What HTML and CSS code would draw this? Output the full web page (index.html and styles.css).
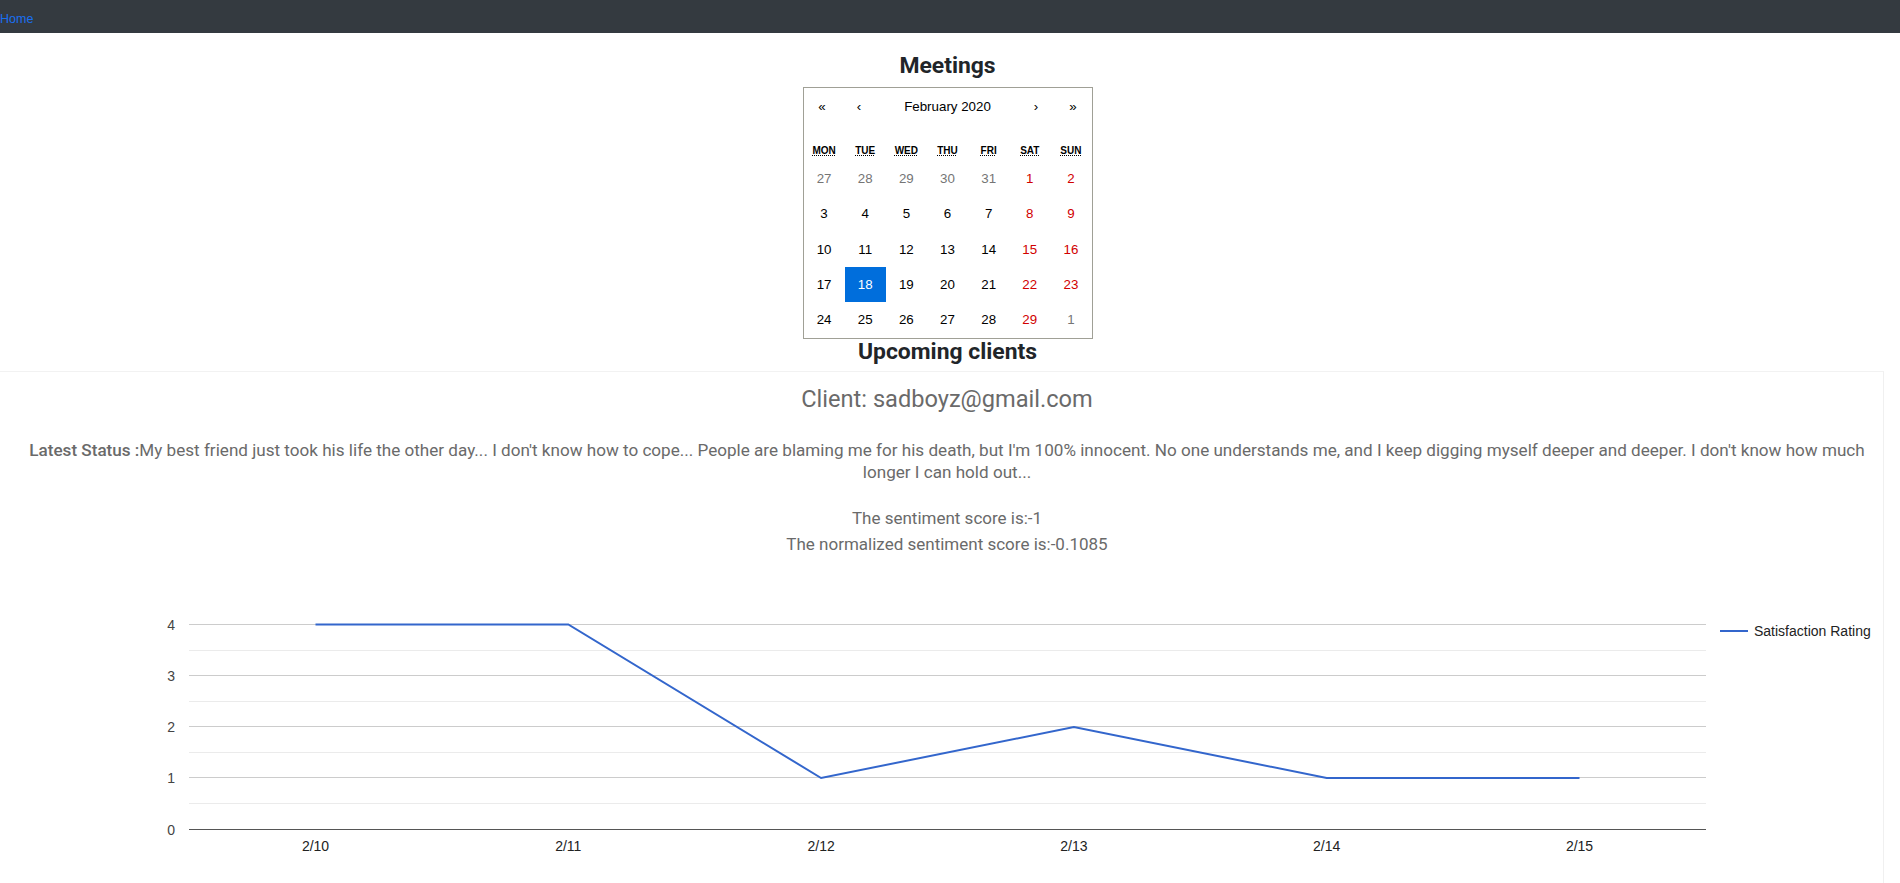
FILE: index.html
```html
<!DOCTYPE html>
<html lang="en">
<head>
<meta charset="utf-8">
<title>Meetings</title>
<link rel="stylesheet" href="styles.css">
</head>
<body>
<nav class="topbar"><a class="topbar-link" href="#">Home</a></nav>
<main class="main">
  <h3 class="section-title meetings-title">Meetings</h3>
  <div class="calendar">
    <div class="cal-nav">
      <button class="cal-arrow">«</button>
      <button class="cal-arrow">‹</button>
      <button class="cal-label">February 2020</button>
      <button class="cal-arrow">›</button>
      <button class="cal-arrow">»</button>
    </div>
    <div class="cal-weekdays">
      <div class="cal-weekday"><abbr title="Monday">Mon</abbr></div>
      <div class="cal-weekday"><abbr title="Tuesday">Tue</abbr></div>
      <div class="cal-weekday"><abbr title="Wednesday">Wed</abbr></div>
      <div class="cal-weekday"><abbr title="Thursday">Thu</abbr></div>
      <div class="cal-weekday"><abbr title="Friday">Fri</abbr></div>
      <div class="cal-weekday"><abbr title="Saturday">Sat</abbr></div>
      <div class="cal-weekday"><abbr title="Sunday">Sun</abbr></div>
    </div>
    <div class="cal-days">
      <button class="cal-tile neighbor">27</button>
      <button class="cal-tile neighbor">28</button>
      <button class="cal-tile neighbor">29</button>
      <button class="cal-tile neighbor">30</button>
      <button class="cal-tile neighbor">31</button>
      <button class="cal-tile weekend">1</button>
      <button class="cal-tile weekend">2</button>
      <button class="cal-tile">3</button>
      <button class="cal-tile">4</button>
      <button class="cal-tile">5</button>
      <button class="cal-tile">6</button>
      <button class="cal-tile">7</button>
      <button class="cal-tile weekend">8</button>
      <button class="cal-tile weekend">9</button>
      <button class="cal-tile">10</button>
      <button class="cal-tile">11</button>
      <button class="cal-tile">12</button>
      <button class="cal-tile">13</button>
      <button class="cal-tile">14</button>
      <button class="cal-tile weekend">15</button>
      <button class="cal-tile weekend">16</button>
      <button class="cal-tile">17</button>
      <button class="cal-tile active">18</button>
      <button class="cal-tile">19</button>
      <button class="cal-tile">20</button>
      <button class="cal-tile">21</button>
      <button class="cal-tile weekend">22</button>
      <button class="cal-tile weekend">23</button>
      <button class="cal-tile">24</button>
      <button class="cal-tile">25</button>
      <button class="cal-tile">26</button>
      <button class="cal-tile">27</button>
      <button class="cal-tile">28</button>
      <button class="cal-tile weekend">29</button>
      <button class="cal-tile neighbor">1</button>
    </div>
  </div>
  <h3 class="section-title clients-title">Upcoming clients</h3>
  <section class="card">
    <div class="card-text">
      <h5 class="client">Client: sadboyz@gmail.com</h5>
      <p class="status"><b class="status-label">Latest Status :</b>My best friend just took his life the other day... I don't know how to cope... People are blaming me for his death, but I'm 100% innocent. No one understands me, and I keep digging myself deeper and deeper. I don't know how much longer I can hold out...</p>
      <p class="score">The sentiment score is:-1</p>
      <p class="score">The normalized sentiment score is:-0.1085</p>
    </div>
    <svg class="chart" width="1883" height="330" viewBox="0 0 1883 330">
      <g class="grid-minor" stroke="#ebebeb" stroke-width="1">
        <line x1="189" y1="90.5" x2="1706" y2="90.5"/>
        <line x1="189" y1="141.5" x2="1706" y2="141.5"/>
        <line x1="189" y1="192.5" x2="1706" y2="192.5"/>
        <line x1="189" y1="243.5" x2="1706" y2="243.5"/>
      </g>
      <g class="grid-major" stroke="#cccccc" stroke-width="1">
        <line x1="189" y1="64.5" x2="1706" y2="64.5"/>
        <line x1="189" y1="115.5" x2="1706" y2="115.5"/>
        <line x1="189" y1="166.5" x2="1706" y2="166.5"/>
        <line x1="189" y1="217.5" x2="1706" y2="217.5"/>
      </g>
      <line x1="189" y1="269.5" x2="1706" y2="269.5" stroke="#555555" stroke-width="1"/>
      <g class="axis-y" font-family="'Liberation Sans', Arial, sans-serif" font-size="14" fill="#444444" text-anchor="end">
        <text x="175" y="69.5">4</text>
        <text x="175" y="120.5">3</text>
        <text x="175" y="171.5">2</text>
        <text x="175" y="222.5">1</text>
        <text x="175" y="274.5">0</text>
      </g>
      <g class="axis-x" font-family="'Liberation Sans', Arial, sans-serif" font-size="14" fill="#222222" text-anchor="middle">
        <text x="315.5" y="291">2/10</text>
        <text x="568.3" y="291">2/11</text>
        <text x="821.1" y="291">2/12</text>
        <text x="1073.9" y="291">2/13</text>
        <text x="1326.7" y="291">2/14</text>
        <text x="1579.5" y="291">2/15</text>
      </g>
      <polyline fill="none" stroke="#3366cc" stroke-width="2" points="315.5,64.5 568.3,64.5 821.1,218 1073.9,167 1326.7,218 1579.5,218"/>
      <line x1="1720" y1="71" x2="1748" y2="71" stroke="#3366cc" stroke-width="2"/>
      <text x="1754" y="76" font-family="'Liberation Sans', Arial, sans-serif" font-size="14" fill="#222222">Satisfaction Rating</text>
    </svg>
  </section>
</main>
</body>
</html>
```
FILE: styles.css
```css
html, body {
  margin: 0;
  padding: 0;
  background: #ffffff;
}

body {
  font-family: Roboto, "Liberation Sans", Arial, sans-serif;
  color: #212529;
}

.topbar {
  height: 33px;
  background: #343a40;
  display: flex;
  align-items: center;
  padding-top: 4px;
  box-sizing: border-box;
}

.topbar-link {
  font-family: "Liberation Sans", Arial, sans-serif;
  font-size: 12.5px;
  color: #1a6ff0;
  text-decoration: none;
}

.main {
  display: flex;
  flex-direction: column;
  align-items: center;
  padding-right: 5px;
}

.section-title {
  font-family: Roboto, sans-serif;
  font-weight: 700;
  font-size: 22.9px;
  line-height: 27px;
  margin: 0;
  color: #212529;
}

.meetings-title {
  margin-top: 19px;
  margin-bottom: 8px;
}

.clients-title {
  margin-top: -1px;
  margin-bottom: 6px;
}

/* Calendar */
.calendar {
  width: 290px;
  box-sizing: border-box;
  border: 1px solid #a0a096;
  font-family: "Liberation Sans", Arial, Helvetica, sans-serif;
  font-size: 13.333px;
  background: #ffffff;
}

.calendar button {
  margin: 0;
  border: 0;
  outline: none;
  background: none;
  font-family: "Liberation Sans", Arial, Helvetica, sans-serif;
  font-size: 13.333px;
  color: #000000;
  cursor: pointer;
}

.cal-nav {
  display: flex;
  height: 36px;
  margin-bottom: 16px;
}

.cal-arrow {
  width: 37px;
  padding: 0;
}

.cal-label {
  flex: 1;
  padding: 0;
}

.cal-weekdays {
  display: grid;
  grid-template-columns: repeat(7, 1fr);
  text-align: center;
  text-transform: uppercase;
  font-weight: bold;
  font-size: 10px;
}

.cal-weekday {
  padding: 5px;
}

.cal-weekday abbr {
  text-decoration: underline dotted;
  color: #000000;
}

.cal-days {
  display: grid;
  grid-template-columns: repeat(7, 1fr);
}

.cal-tile {
  height: 35.33px;
  padding: 0;
  text-align: center;
}

.calendar .cal-tile.neighbor {
  color: #757575;
}

.calendar .cal-tile.weekend {
  color: #d10000;
}

.calendar .cal-tile.active {
  background: #006edc;
  color: #ffffff;
}

/* Card */
.card {
  align-self: stretch;
  margin-right: 11px;
  border-top: 1px solid #f2f2f2;
  border-right: 1px solid #f0f0f0;
}

.card-text {
  padding-left: 11px;
  padding-top: 11px;
  text-align: center;
  color: #6a6a6a;
}

.client {
  font-family: Roboto, sans-serif;
  font-weight: 400;
  font-size: 23.6px;
  line-height: 32px;
  margin: 0 0 24px;
  color: #6a6a6a;
}

.status {
  font-family: Roboto, sans-serif;
  font-size: 17.1px;
  line-height: 22px;
  margin: 0 0 22px;
}

.status-label {
  font-weight: 500;
}

.score {
  font-family: Roboto, sans-serif;
  font-size: 17px;
  line-height: 26px;
  margin: 0;
}

.chart {
  display: block;
  margin-top: 3px;
}
```
